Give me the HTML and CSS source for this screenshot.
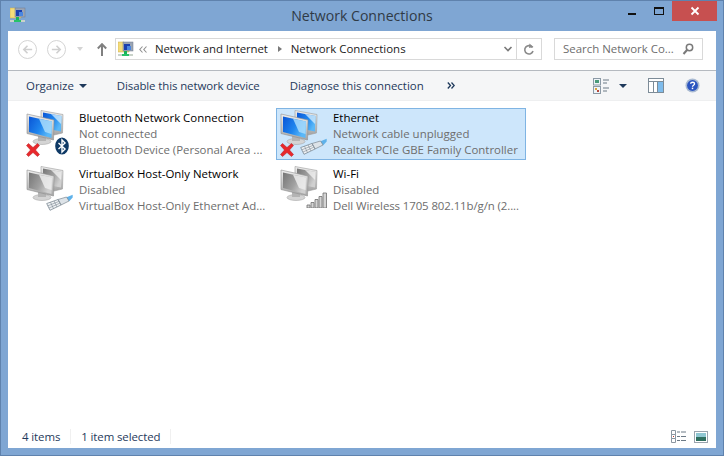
FILE: index.html
```html
<!DOCTYPE html>
<html lang="en">
<head>
<meta charset="utf-8">
<title>Network Connections</title>
<link rel="stylesheet" href="styles.css">
</head>
<body>
<svg class="defs" width="0" height="0" aria-hidden="true">
  <defs>
    <linearGradient id="blue" x1="0" y1="0" x2="1" y2=".5">
      <stop offset="0" stop-color="#0a55d6"/><stop offset=".6" stop-color="#1f86ee"/><stop offset="1" stop-color="#5ab8f8"/>
    </linearGradient>
    <linearGradient id="grey" x1="0" y1="0" x2="1" y2=".5">
      <stop offset="0" stop-color="#767676"/><stop offset=".6" stop-color="#a0a0a0"/><stop offset="1" stop-color="#d0d0d0"/>
    </linearGradient>
    <linearGradient id="body" x1="0" y1="0" x2="0" y2="1">
      <stop offset="0" stop-color="#efefef"/><stop offset="1" stop-color="#a4a4a4"/>
    </linearGradient>
    <symbol id="pc-blue" viewBox="0 0 40 36">
      <path d="M15 .5L37 4.500 36.500 23 28 25 15 20z" fill="url(#body)" stroke="#9c9c9c" stroke-width=".6"/>
      <path d="M17 2.500L35.500 6 35 21.500 17 18z" fill="url(#blue)"/>
      <path d="M25 4L35.500 6 35 14z" fill="#cfeafc" opacity=".8"/>
      <ellipse cx="16" cy="31.500" rx="9" ry="3" fill="#d4d4d4" stroke="#9a9a9a" stroke-width=".5"/>
      <path d="M12 26h8v5h-8z" fill="#b4b4b4"/>
      <path d="M1 4l27 6-.5 20L1 23.500z" fill="url(#body)" stroke="#8f8f8f" stroke-width=".6"/>
      <path d="M3 6.500L26 11.500 25.500 28 3 22z" fill="url(#blue)"/>
      <path d="M13 8.700L26 11.500 25.500 24 19 22z" fill="#a9dcfb" opacity=".85"/>
    </symbol>
    <symbol id="pc-grey" viewBox="0 0 40 36">
      <path d="M15 .5L37 4.500 36.500 23 28 25 15 20z" fill="url(#body)" stroke="#9c9c9c" stroke-width=".6"/>
      <path d="M17 2.500L35.500 6 35 21.500 17 18z" fill="url(#grey)"/>
      <path d="M25 4L35.500 6 35 14z" fill="#f0f0f0" opacity=".8"/>
      <ellipse cx="16" cy="31.500" rx="9" ry="3" fill="#d4d4d4" stroke="#9a9a9a" stroke-width=".5"/>
      <path d="M12 26h8v5h-8z" fill="#b4b4b4"/>
      <path d="M1 4l27 6-.5 20L1 23.500z" fill="url(#body)" stroke="#8f8f8f" stroke-width=".6"/>
      <path d="M3 6.500L26 11.500 25.500 28 3 22z" fill="url(#grey)"/>
      <path d="M13 8.700L26 11.500 25.500 24 19 22z" fill="#ededed" opacity=".85"/>
    </symbol>
    <symbol id="x-red" viewBox="0 0 14 14">
      <path d="M.5 2.500L2.500 .5 7 4.500 11.500 .5 13.500 2.500 9.500 7 13.500 11.500 11.500 13.500 7 9.500 2.500 13.500 .5 11.500 4.500 7z" fill="#e8282c" stroke="#b4181c" stroke-width=".5"/>
    </symbol>
    <symbol id="plug" viewBox="0 0 27 17">
      <path d="M20 3.500L26.700 .8 26.700 3.500 23 7.500z" fill="#5fb2ea"/>
      <path d="M12 5.500L20.500 3 23 7 15 11z" fill="#dde3e8" stroke="#7b8791" stroke-width=".7"/>
      <path d="M.7 9.500L12 5.500 15 11 4 16.300z" fill="#eef1f3" stroke="#6f7c88" stroke-width=".7"/>
      <path d="M4.500 8.200l3 6.500M8 7l3 6M1.800 11.800l11.500-4.500M3 14l11.200-5" stroke="#7c8893" stroke-width=".6" fill="none"/>
    </symbol>
    <symbol id="netfolder" viewBox="0 0 16 16">
      <path d="M0 1h6l1 1h4v9H0z" fill="#f4dc7a" stroke="#c9a94a" stroke-width=".5"/>
      <rect x="5" y="1" width="10" height="9" fill="#9aa5b5" stroke="#6f7a8a" stroke-width=".5"/>
      <rect x="6" y="3" width="6" height="6" fill="#1c3fae"/>
      <rect x="9" y="5" width="4" height="4" fill="#4a86e0"/>
      <rect x="6" y="10" width="3" height="3" fill="#17b25a"/>
      <rect x="0" y="13" width="15" height="2" fill="#c9d2c9"/>
      <rect x="4" y="13" width="7" height="2" fill="#27c268"/>
    </symbol>
  </defs>
</svg>

<main class="window">
  <header class="titlebar">
    <svg class="app-icon"><use href="#netfolder"/></svg>
    <h1 class="title">Network Connections</h1>
    <div class="controls">
      <span class="ctl"><span class="min"></span></span>
      <span class="ctl"><span class="max"></span></span>
      <span class="close">
        <svg width="10" height="10" viewBox="0 0 10 10"><path d="M1.500 1.500l7 7M8.500 1.500l-7 7" stroke="#fff" stroke-width="1.800"/></svg>
      </span>
    </div>
  </header>

  <section class="client">
    <nav class="navbar">
      <span class="round"><svg width="13" height="13" viewBox="0 0 14 14"><path d="M12 7H3M7 3L3 7l4 4" fill="none" stroke="#cfcfcf" stroke-width="1.700"/></svg></span>
      <span class="round"><svg width="13" height="13" viewBox="0 0 14 14"><path d="M2 7h9M7 3l4 4-4 4" fill="none" stroke="#cfcfcf" stroke-width="1.700"/></svg></span>
      <span class="recent"></span>
      <svg class="up" width="10" height="13" viewBox="0 0 10 13"><path d="M5 13V1.500M.8 5.500L5 1.200l4.200 4.300" fill="none" stroke="#808080" stroke-width="2"/></svg>
      <div class="address">
        <svg class="addr-icon"><use href="#netfolder"/></svg>
        <svg class="chev" width="8" height="7" viewBox="0 0 8 7"><path d="M3.500 .5L.8 3.500l2.700 3M7.500 .5L4.800 3.500l2.700 3" fill="none" stroke="#909090" stroke-width="1.100"/></svg>
        <span class="crumb tight">Network and Internet</span>
        <span class="sep"></span>
        <span class="crumb">Network Connections</span>
        <svg class="addr-down" width="10" height="8" viewBox="0 0 10 8"><path d="M1.500 2L5 5.500 8.500 2" fill="none" stroke="#7a7a7a" stroke-width="1.600"/></svg>
        <span class="refresh"><svg width="12" height="13" viewBox="0 0 12 13"><path d="M9.500 4.500A4.200 4.200 0 1 0 10 8" fill="none" stroke="#8a8a8a" stroke-width="1.600"/><path d="M6.500 0.500l4 3.500-4.500 1z" fill="#8a8a8a"/></svg></span>
      </div>
      <div class="search">
        <span class="search-text">Search Network Co...</span>
        <svg width="12" height="12" viewBox="0 0 12 12"><circle cx="7.500" cy="4.500" r="3.200" fill="none" stroke="#7a7a7a" stroke-width="1.500"/><path d="M5 7l-3.500 4" stroke="#7a7a7a" stroke-width="2"/></svg>
      </div>
    </nav>

    <div class="toolbar">
      <span class="tool organize">Organize<span class="caret"></span></span>
      <span class="tool disable tight">Disable this network device</span>
      <span class="tool diagnose">Diagnose this connection</span>
      <svg class="more" width="8" height="7" viewBox="0 0 8 7"><path d="M.8.500L3.500 3.500.8 6.500M4.500.500L7.200 3.500 4.500 6.500" fill="none" stroke="#1e395b" stroke-width="1.300"/></svg>
      <div class="tool-right">
        <svg class="views" width="16" height="16" viewBox="0 0 16 16"><rect x=".5" y=".5" width="7" height="6.500" fill="#eef4f8" stroke="#8c9aa6"/><rect x="2" y="2" width="4" height="3" fill="#4a9a7a"/><rect x=".5" y="8.500" width="7" height="7" fill="#eef4f8" stroke="#8c9aa6"/><rect x="2" y="10" width="2" height="2" fill="#d9a23a"/><rect x="4" y="12" width="2" height="2" fill="#b5483a"/><path d="M10 2h6M10 5h4M10 10h6M10 13h4" stroke="#6d7a86"/></svg>
        <span class="caret view-caret"></span>
        <svg class="pane" width="16" height="15" viewBox="0 0 16 15"><rect x=".5" y=".5" width="15" height="14" fill="#fff" stroke="#7d8c98"/><path d="M1 3.500h14" stroke="#7d8c98"/><rect x="9.500" y="4" width="5.500" height="10" fill="#7fbcec"/><path d="M5.500 4v10M9.500 4v10" stroke="#7d8c98"/></svg>
        <svg class="help" width="15" height="15" viewBox="0 0 16 16"><circle cx="8" cy="8" r="7.500" fill="#a9bad2"/><circle cx="8" cy="8" r="5.800" fill="#2b55c0"/><path d="M6 6.200C6 4 10.200 4 10.200 6.200 10.200 7.800 8 7.600 8 9.300" fill="none" stroke="#fff" stroke-width="1.400"/><rect x="7.200" y="10.300" width="1.600" height="1.600" fill="#fff"/></svg>
      </div>
    </div>

    <div class="items">
      <article class="item">
        <div class="ico">
          <svg class="pc"><use href="#pc-blue"/></svg>
          <svg class="x"><use href="#x-red"/></svg>
          <svg class="bt" width="14" height="18" viewBox="0 0 16 20"><ellipse cx="8" cy="10" rx="7.800" ry="9.800" fill="#0f3a66"/><path d="M4 6.500l7.500 7L8 17V3l3.500 3.500L4 13.500" fill="none" stroke="#fff" stroke-width="1.600"/></svg>
        </div>
        <div class="txt">
          <div class="name">Bluetooth Network Connection</div>
          <div class="sub">Not connected</div>
          <div class="sub">Bluetooth Device (Personal Area ...</div>
        </div>
      </article>
      <article class="item selected">
        <div class="ico">
          <svg class="pc"><use href="#pc-blue"/></svg>
          <svg class="x"><use href="#x-red"/></svg>
          <svg class="plug"><use href="#plug"/></svg>
        </div>
        <div class="txt">
          <div class="name">Ethernet</div>
          <div class="sub">Network cable unplugged</div>
          <div class="sub">Realtek PCIe GBE Family Controller</div>
        </div>
      </article>
      <article class="item">
        <div class="ico">
          <svg class="pc"><use href="#pc-grey"/></svg>
          <svg class="plug"><use href="#plug"/></svg>
        </div>
        <div class="txt">
          <div class="name">VirtualBox Host-Only Network</div>
          <div class="sub">Disabled</div>
          <div class="sub">VirtualBox Host-Only Ethernet Ad...</div>
        </div>
      </article>
      <article class="item">
        <div class="ico">
          <svg class="pc"><use href="#pc-grey"/></svg>
          <svg class="bars" width="21" height="16" viewBox="0 0 21 16"><path d="M1 13h3v3H1zM5 10.500h3V16H5zM9 7.500h3V16H9zM13 4.500h3V16h-3zM17 1h3.500v15H17z" fill="#d4d4d4" stroke="#6f6f6f" stroke-width=".8"/></svg>
        </div>
        <div class="txt">
          <div class="name">Wi-Fi</div>
          <div class="sub">Disabled</div>
          <div class="sub tight">Dell Wireless 1705 802.11b/g/n (2....</div>
        </div>
      </article>
    </div>

    <footer class="status">
      <span class="tight">4 items</span>
      <span class="divider"></span>
      <span class="tight">1 item selected</span>
      <span class="divider"></span>
      <div class="status-right">
        <svg width="15" height="13" viewBox="0 0 15 13"><path d="M.5.500h4v4h-4zM.5 4.500h4v4h-4zM.5 8.500h4v4h-4z" fill="#fff" stroke="#8c96a0"/><rect x="2" y="6" width="1" height="1" fill="#c0392b"/><path d="M6 2h3M10 2h5M6 6.500h3M10 6.500h5M6 10.500h3M10 10.500h5" stroke="#6d7a86"/></svg>
        <svg width="14" height="12" viewBox="0 0 14 12"><rect x=".5" y=".5" width="13" height="11" fill="#fff" stroke="#9aa4ae"/><rect x="2" y="2" width="10" height="8" fill="#8fc7d2"/><rect x="2" y="6" width="10" height="4" fill="#2f6f5f"/></svg>
      </div>
    </footer>
  </section>
</main>
</body>
</html>
```

FILE: styles.css
```css
* { box-sizing: border-box; }
html, body { margin: 0; padding: 0; }
body { width: 724px; height: 456px; overflow: hidden; font-family: "Open Sans", "Noto Sans", sans-serif; font-size: 11.45px; }
.defs { display: block; width: 0; height: 0; }
.tight { letter-spacing: -0.1px; }

.window { width: 724px; height: 456px; background: #7fa6d3; border: 1px solid #5f82ad; display: flex; flex-direction: column; padding: 0 7px 7px; }

.titlebar { height: 30px; flex: none; display: flex; align-items: flex-start; position: relative; }
.app-icon { width: 16px; height: 16px; margin: 6px 0 0 2px; flex: none; }
.title { margin: 0; position: absolute; left: 0; right: 0; top: 5px; text-align: center; font-size: 14.1px; font-weight: 400; color: #2f3a46; line-height: 20px; }
.controls { margin-left: auto; display: flex; height: 20px; margin-right: -1px; }
.ctl { width: 27px; display: flex; align-items: center; justify-content: center; }
.min { width: 8px; height: 2px; background: #111; margin-top: 6px; }
.max { width: 10px; height: 8px; border: 1px solid #111; border-top-width: 2px; }
.close { width: 45px; height: 20px; background: #c75050; display: flex; align-items: center; justify-content: center; }

.client { flex: 1; background: #fff; display: flex; flex-direction: column; min-height: 0; }

.navbar { height: 39px; flex: none; display: flex; align-items: center; padding: 7px 12px 10px 10px; }
.round { width: 19px; height: 19px; border-radius: 50%; border: 1px solid #d4d4d4; display: flex; align-items: center; justify-content: center; margin-right: 10px; flex: none; }
.recent { width: 0; height: 0; border: 3.5px solid transparent; border-top: 4px solid #d4d4d4; border-bottom: 0; margin: 0 14px 0 1px; flex: none; }
.up { margin-right: 8px; flex: none; }
.address { width: 427px; height: 22px; border: 1px solid #d9d9d9; display: flex; align-items: center; margin-right: 12px; flex: none; color: #1a1a1a; }
.addr-icon { width: 16px; height: 16px; margin-left: 2px; flex: none; }
.chev { margin: 0 8px 0 5px; flex: none; }
.crumb { line-height: 18px; padding-bottom: 1px; }
.sep { width: 0; height: 0; border: 3.5px solid transparent; border-left: 4px solid #7a7a7a; border-right: 0; margin: 0 9px 0 10px; flex: none; }
.addr-down { margin-left: auto; margin-right: 3px; }
.refresh { width: 25px; height: 20px; border-left: 1px solid #d9d9d9; display: flex; align-items: center; justify-content: center; }
.search { width: 149px; height: 22px; border: 1px solid #d9d9d9; display: flex; align-items: center; justify-content: space-between; padding: 0 8px; color: #6d6d6d; flex: none; }
.search-text { padding-bottom: 1px; }

.toolbar { height: 31px; flex: none; background: #f5f6f7; border-top: 1px solid #b5bac0; border-bottom: 1px solid #eeeff0; display: flex; align-items: center; color: #1e395b; }
.tool { white-space: nowrap; }
.organize { margin-left: 18px; display: flex; align-items: center; }
.caret { display: inline-block; width: 0; height: 0; border: 4px solid transparent; border-top: 4px solid #1e395b; border-bottom: 0; margin-left: 5px; }
.disable { margin-left: 30px; }
.diagnose { margin-left: 30px; }
.more { margin-left: 23px; }
.tool-right { margin-left: auto; display: flex; align-items: center; margin-right: 16px; }
.view-caret { margin-left: 10px; }
.pane { margin-left: 21px; }
.help { margin-left: 21px; }

.items { flex: 1; min-height: 0; padding: 7px 0 0 14px; display: grid; grid-template-columns: 250px 250px; grid-auto-rows: 52px; column-gap: 4px; row-gap: 4px; align-content: start; }
.item { display: flex; border: 1px solid transparent; padding-left: 1px; }
.item.selected { background: #cde6fb; border-color: #7fb4e3; }
.ico { width: 55px; height: 50px; position: relative; flex: none; }
.pc { position: absolute; left: 2px; top: 1px; width: 40px; height: 36px; }
.x { position: absolute; left: 2px; top: 34px; width: 14px; height: 14px; }
.bt { position: absolute; left: 31px; top: 28px; }
.plug { position: absolute; left: 22px; top: 29px; width: 27px; height: 17px; }
.bars { position: absolute; left: 28px; top: 27px; }
.txt { flex: 1; min-width: 0; padding-top: 1px; white-space: nowrap; }
.name { color: #000; line-height: 16px; }
.sub { color: #6d6d6d; line-height: 16px; }

.status { height: 23px; flex: none; display: flex; align-items: center; padding: 0 8px 0 14px; color: #1e395b; }
.divider { width: 1px; height: 15px; background: #f0f0f0; margin: 0 10px; }
.status-right { margin-left: auto; display: flex; align-items: center; gap: 8px; }
```
